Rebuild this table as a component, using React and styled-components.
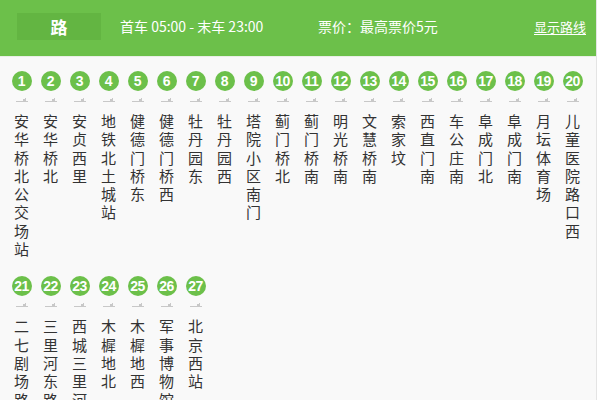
import React from "react";
import styled, { createGlobalStyle } from "styled-components";

const Global = createGlobalStyle`
  html, body { margin: 0; padding: 0; background: #ffffff; }
  body { font-family: "Noto Sans CJK SC", "Noto Sans", sans-serif; }
`;

const Panel = styled.div`
  width: 596px;
  height: 400px;
  overflow: hidden;
  background: #f9f9f9;
  border-right: 1px solid #e4e4e4;
`;

const Header = styled.div`
  height: 57px;
  background: #6cc04a;
  display: flex;
  align-items: center;
  padding: 0 8px 4px 17px;
  box-sizing: border-box;
  color: #fff;
  border-bottom: 1px solid #e9efe6;
`;

const RouteBox = styled.div`
  width: 84px;
  height: 27px;
  background: #63b542;
  display: flex;
  align-items: center;
  justify-content: center;
  font-size: 17px;
  font-weight: 700;
  margin-right: 19px;
`;

const Info = styled.div`
  font-size: 14px;
  white-space: nowrap;
  width: ${(p) => p.$w}px;
`;

const Link = styled.a`
  margin-left: auto;
  color: #fff;
  font-size: 13px;
  text-decoration: underline;
  text-underline-offset: 2px;
  margin-right: 2px;
`;

const Stations = styled.div`
  display: flex;
  flex-wrap: wrap;
  align-items: flex-start;
  padding: 14px 0 0 7px;
  row-gap: 18px;
`;

const Station = styled.div`
  width: 29px;
  display: flex;
  flex-direction: column;
  align-items: center;
`;

const Dot = styled.div`
  width: 20px;
  height: 20px;
  border-radius: 50%;
  background: #6cc04a;
  color: #fff;
  font-family: "Liberation Sans", Arial, sans-serif;
  font-weight: 700;
  font-size: 14px;
  display: flex;
  align-items: center;
  justify-content: center;
  letter-spacing: -0.5px;
`;

const Marker = styled.svg`
  display: block;
  margin-top: 6px;
`;

const Name = styled.div`
  margin-top: 10px;
  width: 15px;
  font-size: 15px;
  line-height: 18.3px;
  color: #333;
  word-break: break-all;
  text-align: center;
`;

const row = [
  "安华桥北公交场站", "安华桥北", "安贞西里", "地铁北土城站", "健德门桥东", "健德门桥西",
  "牡丹园东", "牡丹园西", "塔院小区南门", "蓟门桥北", "蓟门桥南", "明光桥南", "文慧桥南",
  "索家坟", "西直门南", "车公庄南", "阜成门北", "阜成门南", "月坛体育场", "儿童医院路口西",
  "二七剧场路", "三里河东路", "西城三里河", "木樨地北", "木樨地西", "军事博物馆", "北京西站",
];

export default function App() {
  return (
    <>
      <Global />
      <Panel>
        <Header>
          <RouteBox>路</RouteBox>
          <Info $w={198}>首车 05:00 - 末车 23:00</Info>
          <Info $w={150}>票价：最高票价5元</Info>
          <Link>显示路线</Link>
        </Header>
        <Stations>
          {row.map((n, i) => (
            <Station key={i}>
              <Dot>{i + 1}</Dot>
              <Marker width="14" height="5" viewBox="0 0 14 5">
                <path d="M1 4.5 H13" stroke="#c8c8c8" strokeWidth="1" />
                <path d="M8 4 V2 H10 V1 H11 V4 Z" fill="#c8c8c8" />
              </Marker>
              <Name>{n}</Name>
            </Station>
          ))}
        </Stations>
      </Panel>
    </>
  );
}
